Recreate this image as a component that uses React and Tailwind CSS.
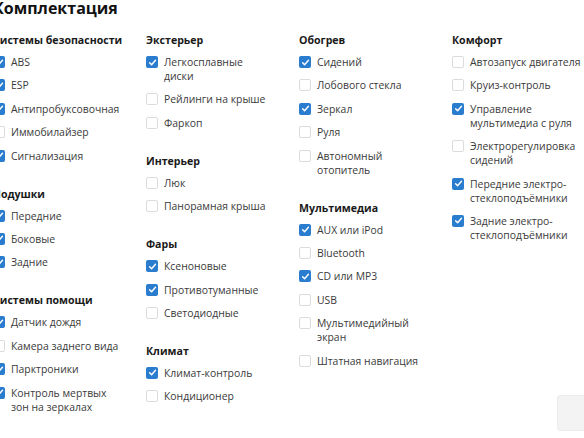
import React from "react";

const columns = [
  {
    w: "max-w-[112px]",
    sections: [
      {
        title: "Системы безопасности",
        items: [
          ["ABS", true],
          ["ESP", true],
          ["Антипробуксовочная", true],
          ["Иммобилайзер", false],
          ["Сигнализация", true],
        ],
      },
      {
        title: "Подушки",
        items: [
          ["Передние", true],
          ["Боковые", true],
          ["Задние", true],
        ],
      },
      {
        title: "Системы помощи",
        items: [
          ["Датчик дождя", true],
          ["Камера заднего вида", false],
          ["Парктроники", true],
          ["Контроль мертвых зон на зеркалах", true],
        ],
      },
    ],
  },
  {
    w: "max-w-[104px]",
    sections: [
      {
        title: "Экстерьер",
        items: [
          ["Легкосплавные диски", true],
          ["Рейлинги на крыше", false],
          ["Фаркоп", false],
        ],
      },
      {
        title: "Интерьер",
        items: [
          ["Люк", false],
          ["Панорамная крыша", false],
        ],
      },
      {
        title: "Фары",
        items: [
          ["Ксеноновые", true],
          ["Противотуманные", true],
          ["Светодиодные", false],
        ],
      },
      {
        title: "Климат",
        items: [
          ["Климат-контроль", true],
          ["Кондиционер", false],
        ],
      },
    ],
  },
  {
    w: "max-w-[108px]",
    sections: [
      {
        title: "Обогрев",
        items: [
          ["Сидений", true],
          ["Лобового стекла", false],
          ["Зеркал", true],
          ["Руля", false],
          ["Автономный отопитель", false],
        ],
      },
      {
        title: "Мультимедиа",
        items: [
          ["AUX или iPod", true],
          ["Bluetooth", false],
          ["CD или MP3", true],
          ["USB", false],
          ["Мультимедийный экран", false],
          ["Штатная навигация", false],
        ],
      },
    ],
  },
  {
    w: "max-w-[116px]",
    sections: [
      {
        title: "Комфорт",
        items: [
          ["Автозапуск двигателя", false],
          ["Круиз-контроль", false],
          ["Управление мультимедиа с руля", true],
          ["Электрорегулировка сидений", false],
          ["Передние электро-стеклоподъёмники", true],
          ["Задние электро-стеклоподъёмники", true],
        ],
      },
    ],
  },
];

function Box({ checked }) {
  if (checked) {
    return (
      <span className="mt-px flex h-3 w-3 shrink-0 items-center justify-center rounded-[2px] bg-[#2a7ccf]">
        <svg width="9" height="9" viewBox="0 0 10 10" fill="none">
          <path d="M1.8 5.2 L4 7.4 L8.3 2.6" stroke="white" strokeWidth="1.6" strokeLinecap="round" strokeLinejoin="round" />
        </svg>
      </span>
    );
  }
  return <span className="mt-px h-3 w-3 shrink-0 rounded-[2px] border border-[#dcdcdc] bg-white" />;
}

export default function App() {
  return (
    <div className="relative h-[438px] w-[584px] overflow-hidden bg-white font-['Open_Sans',sans-serif]">
      <div className="ml-[-7px]">
        <h1 className="mt-[-2px] text-[16px] font-bold leading-[20px] text-[#111]">Комплектация</h1>
        <div className="mt-[14px] grid grid-cols-[153px_153px_153px_153px]">
          {columns.map((col, ci) => (
            <div key={ci} className="flex flex-col gap-[23px]">
              {col.sections.map((sec) => (
                <div key={sec.title}>
                  <div className="whitespace-nowrap text-[10.6px] font-bold leading-[16px] text-[#1a1a1a]">{sec.title}</div>
                  <ul className="mt-[7px] flex flex-col gap-[9.4px]">
                    {sec.items.map(([label, checked]) => (
                      <li key={label} className="flex items-start gap-[6px]">
                        <Box checked={checked} />
                        <span className={`${col.w} text-[10.4px] leading-[14px] text-[#3a3a3a]`}>{label}</span>
                      </li>
                    ))}
                  </ul>
                </div>
              ))}
            </div>
          ))}
        </div>
      </div>
      <div className="absolute left-[557px] top-[395px] h-[36px] w-[36px] rounded-[3px] border border-[#ececec] bg-[#f3f3f3]" />
    </div>
  );
}
